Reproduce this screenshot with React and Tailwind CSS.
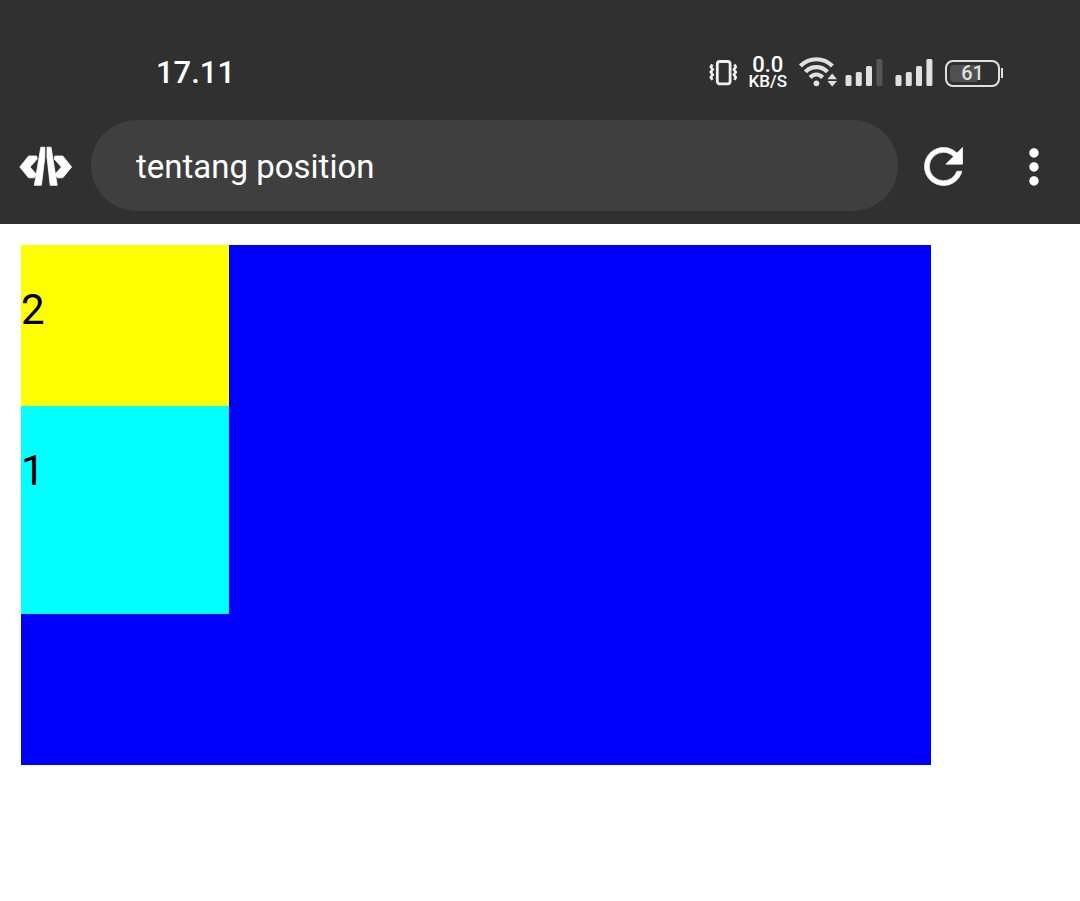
import { MdMoreVert } from "react-icons/md";

function VibrateIcon() {
  return (
    <svg width="28" height="34" viewBox="0 0 28 34" fill="none" stroke="#f0f0f0" aria-hidden="true">
      <rect x="8.3" y="5.5" width="12.8" height="22.4" rx="2.6" strokeWidth="2.8" />
      <path d="M3.4 8.500 1.800 11l1.900 2.500-1.900 2.600 1.900 2.600-1.900 2.600 1.600 2.600" strokeWidth="2.600" />
      <path d="M25.4 8.500l1.400 2.500-1.900 2.500 1.900 2.600-1.900 2.600 1.900 2.600-1.400 2.600" strokeWidth="2.600" />
    </svg>
  );
}

function WifiIcon() {
  return (
    <svg width="38" height="34" viewBox="0 0 38 34" fill="none" stroke="#e0e0e0" aria-hidden="true">
      <path d="M1.400 9.900C10.400 1 24.400 1 33.400 9.900" strokeWidth="4.200" />
      <path d="M6.400 15.900C12.600 9.600 22.200 9.600 28.400 15.900" strokeWidth="4.200" />
      <path d="M11.200 21.500C14.700 17.500 20.100 17.500 23.600 21.500" strokeWidth="4.200" />
      <circle cx="17.400" cy="27.300" r="2.900" fill="#e0e0e0" stroke="none" />
      <path d="M33.200 17.600l4.800 5.600h-9.600zM33.200 30.600l4.800-5.600h-9.600z" fill="#e0e0e0" stroke="none" />
    </svg>
  );
}

function SignalIcon({ lastBar }) {
  return (
    <svg width="38" height="34" viewBox="0 0 38 34" fill="#e0e0e0" aria-hidden="true">
      <rect x="0.500" y="19" width="6" height="11" rx="1.500" />
      <rect x="10.800" y="16" width="6" height="14" rx="1.500" />
      <rect x="21" y="10" width="6" height="20" rx="1.500" />
      <rect x="31.400" y="3" width="6" height="27" rx="1.500" fill={lastBar} />
    </svg>
  );
}

function Battery() {
  return (
    <div className="flex items-center gap-px">
      <div className="flex h-[27px] w-[55px] items-center rounded-lg border-2 border-[#e0e0e0] p-[3px]">
        <div className="grid h-full w-full">
          <span className="col-start-1 row-start-1 w-3/5 rounded-l bg-[#505050]" />
          <span className="col-start-1 row-start-1 text-center text-xl leading-[17px] font-medium text-[#e0e0e0]">61</span>
        </div>
      </div>
      <span className="h-[10px] w-[2px] bg-[#e0e0e0]" />
    </div>
  );
}

function EditorLogo() {
  return (
    <svg width="54" height="44" viewBox="0 -2 54 44" fill="#fff" stroke="#fff" strokeWidth="0.800" strokeLinejoin="round" aria-hidden="true">
      <path d="M9.600 10h8l.6 3L11 21l6.500 7.500-2.500 3.300H9.600L.8 21z" />
      <path d="M43.800 10h-8l-.6 3 7.200 8-6.500 7.500 2.500 3.300h5.400L52.600 21z" />
      <path d="M21.800 1.200h4v10l-3.400 28.100h-7z" />
      <path d="M28 1.200h4l6.200 38.100h-7L28 11.200z" />
    </svg>
  );
}

function ReloadIcon() {
  return (
    <svg width="57" height="57" viewBox="0 0 24 24" fill="#fff" stroke="#fff" strokeWidth="0.300" aria-hidden="true">
      <path d="M17.650 6.350A7.958 7.958 0 0 0 12 4a8 8 0 1 0 0 16c3.730 0 6.840-2.550 7.730-6h-2.080A5.990 5.990 0 0 1 12 18a6 6 0 1 1 0-12c1.660 0 3.140.69 4.220 1.780L13 11h7V4z" />
    </svg>
  );
}

function StatusBar() {
  return (
    <div className="flex items-center justify-between pt-[46px] pr-[77px] pb-5 pl-[156px]">
      <time className="text-[31px] leading-[54px] font-medium">17.11</time>
      <div className="flex items-center gap-3">
        <VibrateIcon />
        <div className="flex flex-col items-center font-medium">
          <span className="text-[22px] leading-4">0.0</span>
          <span className="text-[17px] leading-4">KB/S</span>
        </div>
        <div className="flex items-center gap-2">
          <WifiIcon />
          <SignalIcon lastBar="#555" />
        </div>
        <SignalIcon lastBar="#e0e0e0" />
        <Battery />
      </div>
    </div>
  );
}

function Toolbar() {
  return (
    <div className="flex items-center pr-[18px] pb-[13px] pl-[19px]">
      <EditorLogo />
      <input
        type="text"
        aria-label="Page title"
        defaultValue="tentang position"
        className="ml-[18px] h-[91px] min-w-0 flex-1 rounded-full bg-[#3f3f3f] px-[45px] pt-0.5 text-[33px] text-white outline-none"
      />
      <button type="button" aria-label="Reload" className="ml-[17px] pt-0.5">
        <ReloadIcon />
      </button>
      <button type="button" aria-label="More options" className="ml-[34px] pt-0.5">
        <MdMoreVert size={56} />
      </button>
    </div>
  );
}

export default function App() {
  return (
    <div className="min-h-screen bg-white font-['Roboto',sans-serif]">
      <header className="bg-[#303030] text-white">
        <StatusBar />
        <Toolbar />
      </header>
      <main className="p-[21px] text-[42px] leading-[48px] text-black">
        <div className="h-[520px] max-w-[910px] bg-[#0000ff]">
          <div className="h-[161px] w-[208px] bg-[#ffff00] pt-[41px]">
            <p>2</p>
          </div>
          <div className="h-[208px] w-[208px] bg-[#00ffff] pt-[41px]">
            <p>1</p>
          </div>
        </div>
      </main>
    </div>
  );
}
